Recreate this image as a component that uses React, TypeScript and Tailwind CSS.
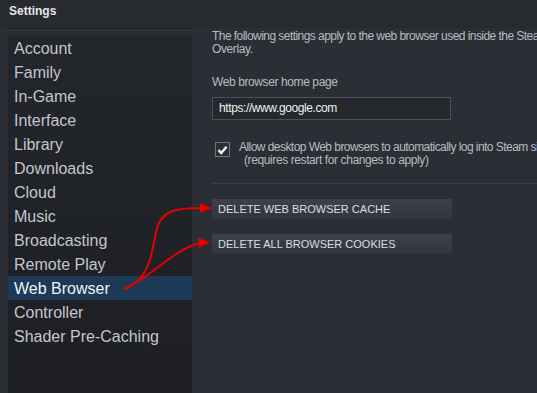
import React from "react";

const items = [
  "Account",
  "Family",
  "In-Game",
  "Interface",
  "Library",
  "Downloads",
  "Cloud",
  "Music",
  "Broadcasting",
  "Remote Play",
  "Web Browser",
  "Controller",
  "Shader Pre-Caching",
];

export default function App() {
  return (
    <div
      className="relative w-[537px] h-[393px] overflow-hidden bg-[#2b2e34] flex flex-col"
      style={{ fontFamily: '"Liberation Sans", Arial, sans-serif' }}
    >
      <div className="h-[28px] shrink-0 bg-[#272a2f] pl-[9px] pt-[4px] text-[12px] font-bold text-[#e4e6e8] leading-[14px]">
        Settings
      </div>
      <div className="flex flex-1 min-h-0">
        <div className="ml-[8px] w-[184px] shrink-0 flex flex-col border-t border-[#1b1d21] bg-gradient-to-b from-[#23262b] to-[#1d1f23]">
          <div className="h-[7px] bg-gradient-to-b from-[#30343b] to-[#262930]" />
          <div className="flex flex-col">
            {items.map((it) => (
              <div
                key={it}
                className={
                  "h-[24px] flex items-center pl-[6px] pt-[2px] text-[16px] leading-[18px] " +
                  (it === "Web Browser"
                    ? "bg-[#1d3956] text-[#f0f2f4]"
                    : "text-[#c3c7cc]")
                }
              >
                {it}
              </div>
            ))}
          </div>
        </div>
        <div className="flex-1 min-w-0 pl-[20px] pt-[2px] flex flex-col text-[12px] tracking-[-0.4px] text-[#b8bcc0] leading-[13px] overflow-hidden">
          <div className="whitespace-nowrap tracking-[-0.55px]">
            The following settings apply to the web browser used inside the Steam
          </div>
          <div>Overlay.</div>
          <div className="mt-[20px]">Web browser home page</div>
          <div className="mt-[8px] w-[239px] h-[23px] border border-[#4a4f5a] bg-[#25282d] flex items-center pl-[6px] text-[#eef0f2]">
            https://www.google.com
          </div>
          <div className="mt-[21px] flex items-start">
            <div className="ml-[3px] mt-[1px] w-[15px] h-[15px] border border-[#707379] flex items-center justify-center shrink-0">
              <svg width="11" height="10" viewBox="0 0 11 10">
                <path d="M1.5 5.2 L4.2 8 L9.6 1.8" stroke="#ffffff" strokeWidth="2.4" fill="none" />
              </svg>
            </div>
            <div className="ml-[9px] whitespace-nowrap">
              <div className="tracking-[-0.55px]">Allow desktop Web browsers to automatically log into Steam sites</div>
              <div className="pl-[5px]">(requires restart for changes to apply)</div>
            </div>
          </div>
          <div className="mt-[16px] h-[1px] bg-[#3d4147]" />
          <div className="mt-[15px] w-[240px] h-[20px] bg-gradient-to-b from-[#3e414a] to-[#32353d] flex items-center pl-[6px] text-[11px] tracking-normal text-[#dcdee0]">
            DELETE WEB BROWSER CACHE
          </div>
          <div className="mt-[15px] w-[240px] h-[20px] bg-gradient-to-b from-[#3e414a] to-[#32353d] flex items-center pl-[6px] text-[11px] tracking-normal text-[#dcdee0]">
            DELETE ALL BROWSER COOKIES
          </div>
        </div>
      </div>
      <svg
        className="absolute left-0 top-0 pointer-events-none"
        width="537"
        height="393"
        viewBox="0 0 537 393"
      >
        <path
          d="M124 289 C150 280 152 252 156 232 C160 212 172 208 202 208"
          stroke="#e60000"
          strokeWidth="2"
          fill="none"
        />
        <polygon points="212,208 200,203 200,213" fill="#e60000" />
        <path
          d="M124 289 C152 277 172 250 200 243"
          stroke="#e60000"
          strokeWidth="2"
          fill="none"
        />
        <polygon points="210,242 198,238 199,248" fill="#e60000" />
      </svg>
    </div>
  );
}
